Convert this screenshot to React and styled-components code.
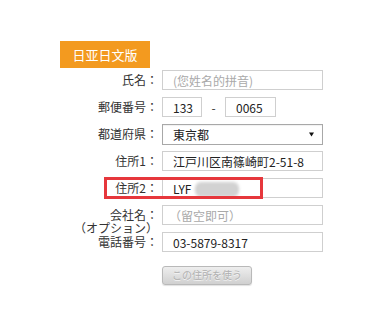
import React from "react";
import styled, { createGlobalStyle } from "styled-components";

const Global = createGlobalStyle`
  html, body { margin: 0; padding: 0; background: #fff; }
  body { font-family: "Noto Sans CJK SC", "Noto Sans CJK JP", "Noto Sans", sans-serif; color: #333; }
`;

const Page = styled.div`
  width: 375px;
  height: 329px;
  box-sizing: border-box;
  padding: 41px 0 0 60px;
`;

const Tab = styled.div`
  width: 90px;
  height: 27px;
  background: #f39a1f;
  color: #fff;
  font-size: 13px;
  display: flex;
  align-items: center;
  justify-content: center;
  margin-bottom: 2px;
`;

const Form = styled.div`
  display: grid;
  grid-template-columns: 98px 161px;
  grid-auto-rows: 20px;
  column-gap: 4px;
  row-gap: 7px;
`;

const Row = styled.div`
  display: contents;
`;

const Label = styled.div`
  font-family: "Noto Sans CJK JP", "Noto Sans CJK SC", sans-serif;
  font-size: 12px;
  line-height: 14px;
  display: flex;
  align-items: center;
  justify-content: flex-end;
  white-space: nowrap;
  color: #333;
  ${(p) => (p.$relative ? "position: relative;" : "")}
`;

const TwoLineLabel = styled.div`
  font-family: "Noto Sans CJK JP", "Noto Sans CJK SC", sans-serif;
  font-size: 12px;
  line-height: 13px;
  padding-top: 3px;
  height: 20px;
  box-sizing: border-box;
  text-align: right;
  white-space: nowrap;
  color: #333;
  overflow: visible;
`;

const Field = styled.div`
  box-sizing: border-box;
  height: ${(p) => p.$h || 20}px;
  width: ${(p) => (p.$w ? `${p.$w}px` : "100%")};
  border: 1px solid ${(p) => (p.$dark ? "#a8a8a8" : "#cfcfcf")};
  background: #fff;
  padding-left: ${(p) => p.$pl ?? 10}px;
  padding-right: 6px;
  display: flex;
  align-items: center;
  font-size: 12px;
  color: ${(p) => (p.$muted ? "#a9a9a9" : "#222")};
  white-space: nowrap;
  overflow: hidden;
`;

const ZipLine = styled.div`
  display: flex;
  align-items: center;
`;

const Dash = styled.span`
  font-size: 12px;
  color: #333;
  width: 23px;
  text-align: center;
`;

const SelectBox = styled(Field)`
  justify-content: space-between;
  box-shadow: inset 0 1px 1px rgba(0, 0, 0, 0.06);
`;

const Arrow = styled.svg`
  width: 5px;
  height: 5px;
  margin-right: 2px;
`;

const Blur = styled.span`
  display: inline-block;
  width: 44px;
  height: 15px;
  margin-left: 3px;
  margin-top: 2px;
  background: #d2d2d2;
  border-radius: 6px;
  filter: blur(1.5px);
`;

const Highlight = styled.div`
  position: absolute;
  left: 44px;
  top: -1px;
  width: 159px;
  height: 22px;
  box-sizing: border-box;
  border: 3px solid #e6373c;
  pointer-events: none;
  z-index: 2;
`;

const ButtonCell = styled.div`
  grid-column: 2;
  padding-top: 1px;
`;

const UseButton = styled.button`
  width: 90px;
  height: 19px;
  padding: 0;
  border: 1px solid #b9b9b9;
  border-radius: 3px;
  background: linear-gradient(#eeeeee, #d0d0d0);
  color: #b0b0b0;
  font-family: "Noto Sans CJK JP", "Noto Sans CJK SC", sans-serif;
  font-size: 10px;
  line-height: 16px;
  text-shadow: 0 1px 0 #f4f4f4;
  box-shadow: 0 1px 1px rgba(0, 0, 0, 0.12);
  cursor: default;
`;

export default function App() {
  return (
    <>
      <Global />
      <Page>
        <Tab>日亚日文版</Tab>
        <Form>
          <Row>
            <Label>氏名：</Label>
            <Field $muted>(您姓名的拼音)</Field>
          </Row>
          <Row>
            <Label>郵便番号：</Label>
            <ZipLine>
              <Field $w={40}>133</Field>
              <Dash>-</Dash>
              <Field $w={51}>0065</Field>
            </ZipLine>
          </Row>
          <Row>
            <Label>都道府県：</Label>
            <SelectBox $h={21} $dark>
              <span>東京都</span>
              <Arrow viewBox="0 0 5 5">
                <path d="M0 0.5 L5 0.5 L2.5 4.5 Z" fill="#111" />
              </Arrow>
            </SelectBox>
          </Row>
          <Row>
            <Label>住所1：</Label>
            <Field>江戸川区南篠崎町2-51-8</Field>
          </Row>
          <Row>
            <Label $relative>
              住所2：
              <Highlight />
            </Label>
            <Field>
              LYF
              <Blur />
            </Field>
          </Row>
          <Row>
            <TwoLineLabel>
              会社名：
              <br />
              （オプション）
            </TwoLineLabel>
            <Field $muted $pl={6}>（留空即可）</Field>
          </Row>
          <Row>
            <Label>電話番号：</Label>
            <Field>03-5879-8317</Field>
          </Row>
          <ButtonCell>
            <UseButton type="button">この住所を使う</UseButton>
          </ButtonCell>
        </Form>
      </Page>
    </>
  );
}
